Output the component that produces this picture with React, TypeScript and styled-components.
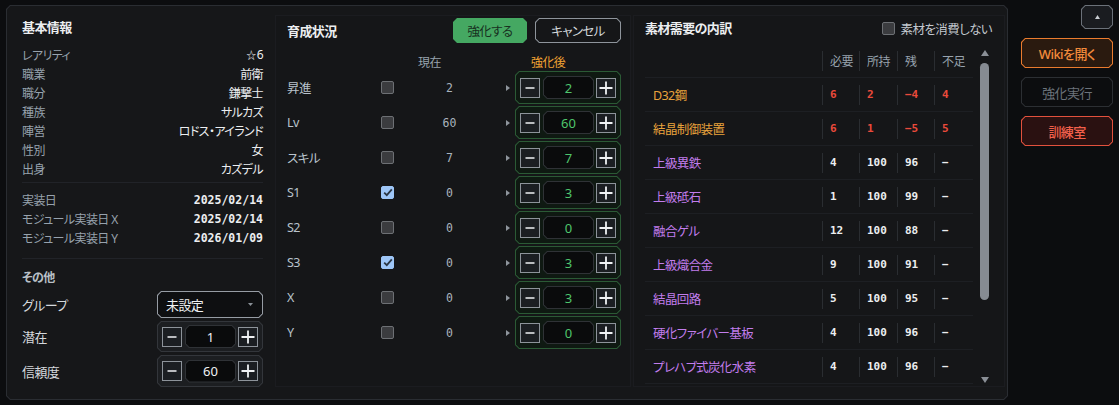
import React from "react";
import styled, { createGlobalStyle, css } from "styled-components";

const cut = (s: number) => css`
  clip-path: polygon(
    ${s}px 0,
    calc(100% - ${s}px) 0,
    100% ${s}px,
    100% calc(100% - ${s}px),
    calc(100% - ${s}px) 100%,
    ${s}px 100%,
    0 calc(100% - ${s}px),
    0 ${s}px
  );
`;

const framed = (s: number, border: string, bg: string) => css`
  position: relative;
  isolation: isolate;
  background: ${border};
  ${cut(s)}
  &::before {
    content: "";
    position: absolute;
    inset: 1px;
    background: ${bg};
    ${cut(Math.max(s - 0.6, 0))}
    z-index: -1;
  }
`;

const GlobalStyle = createGlobalStyle`
  html, body { margin: 0; padding: 0; background: #0c0d0f; }
  body {
    font-family: "Noto Sans", "Noto Sans CJK JP", sans-serif;
    font-feature-settings: "palt";
    letter-spacing: -0.6px;
    color: #e6e8ea;
    -webkit-font-smoothing: antialiased;
  }
  * { box-sizing: border-box; }
`;

const MONO = `"DejaVu Sans Mono", "Liberation Mono", monospace`;

const Page = styled.div`
  display: flex;
  align-items: flex-start;
  gap: 13px;
  padding: 5px 0 0 6px;
  width: 1119px;
  height: 405px;
`;

const MainPanel = styled.div`
  ${framed(4, "#2a2d32", "#161719")}
  width: 1002px;
  height: 395px;
  display: flex;
  align-items: stretch;
  padding: 10px 3px 13px 16px;
`;

/* ---------- left column ---------- */

const LeftColumn = styled.div`
  width: 241px;
  margin-right: 12px;
  padding-top: 3px;
  display: flex;
  flex-direction: column;
`;

const SectionTitle = styled.div`
  font-size: 13px;
  font-weight: 700;
  line-height: 18px;
  color: #eceef0;
  white-space: nowrap;
`;

const InfoList = styled.div<{ $gap: number }>`
  margin-top: ${(p) => p.$gap}px;
  display: flex;
  flex-direction: column;
`;

const InfoRow = styled.div`
  height: 19px;
  display: flex;
  align-items: center;
  justify-content: space-between;
  font-size: 12px;
  white-space: nowrap;
`;

const InfoLabel = styled.span`
  color: #97a2ad;
`;

const InfoValue = styled.span<{ $mono?: boolean }>`
  color: #eceef0;
  ${(p) =>
    p.$mono &&
    css`
      font-family: ${MONO};
      font-weight: 700;
      font-size: 11.5px;
      letter-spacing: 0;
    `}
`;

const Star = styled.span`
  font-size: 10px;
  margin-right: 1px;
`;

const Divider = styled.div<{ $top: number }>`
  height: 1px;
  background: #212328;
  margin-top: ${(p) => p.$top}px;
`;

const SubTitle = styled.div`
  margin-top: 10px;
  font-size: 12px;
  font-weight: 700;
  line-height: 18px;
  color: #b9c0c7;
`;

const FormList = styled.div`
  margin-top: 4px;
  display: flex;
  flex-direction: column;
  gap: 3px;
`;

const FormRow = styled.div`
  display: flex;
  align-items: center;
  justify-content: space-between;
`;

const FormLabel = styled.span`
  font-size: 13px;
  color: #d4d8dc;
`;

const Select = styled.div`
  ${framed(4, "#969ca4", "#0e0f11")}
  width: 106px;
  height: 27px;
  display: flex;
  align-items: center;
  justify-content: space-between;
  padding: 0 10px 0 9px;
  font-size: 13px;
  color: #f0f2f4;
`;

/* ---------- stepper ---------- */

const StepperBox = styled.div<{ $tone: "green" | "plain"; $h: number }>`
  ${(p) =>
    p.$tone === "green"
      ? framed(4, "#2b5a35", "#0f1912")
      : framed(4, "#33363b", "#1c1e21")}
  width: 106px;
  height: ${(p) => p.$h}px;
  display: flex;
  align-items: center;
  padding: 0 5px;
`;

const StepButton = styled.div`
  width: 20px;
  height: 20px;
  border: 1px solid #8d939a;
  background: #1b1e22;
  display: grid;
  place-items: center;
  flex: none;
`;

const ValueField = styled.div<{ $tone: "green" | "plain" }>`
  ${framed(4, "#2f3236", "#0a0b0c")}
  width: 51px;
  height: 23px;
  margin: 0 2px 0 3px;
  display: grid;
  place-items: center;
  font-size: 13px;
  letter-spacing: 0;
  color: ${(p) => (p.$tone === "green" ? "#4fc56c" : "#f0f2f4")};
`;

const MinusIcon = () => (
  <svg width="12" height="12" viewBox="0 0 12 12">
    <path d="M1.5 6h9" stroke="#f0f2f4" strokeWidth="1.6" />
  </svg>
);
const PlusIcon = () => (
  <svg width="14" height="14" viewBox="0 0 14 14">
    <path d="M0.5 7h13M7 0.5v13" stroke="#f0f2f4" strokeWidth="1.8" />
  </svg>
);

const Stepper: React.FC<{ value: string | number; tone: "green" | "plain"; h?: number }> = ({
  value,
  tone,
  h = 33,
}) => (
  <StepperBox $tone={tone} $h={h}>
    <StepButton>
      <MinusIcon />
    </StepButton>
    <ValueField $tone={tone}>{value}</ValueField>
    <StepButton>
      <PlusIcon />
    </StepButton>
  </StepperBox>
);

/* ---------- checkbox ---------- */

const CheckBox = styled.div<{ $checked?: boolean }>`
  width: 13px;
  height: 13px;
  border-radius: 2px;
  border: 1px solid ${(p) => (p.$checked ? "#9ec6f7" : "#6d7074")};
  background: ${(p) => (p.$checked ? "#9ec6f7" : "#3b3c3f")};
  display: grid;
  place-items: center;
  flex: none;
`;

const Check: React.FC<{ checked?: boolean }> = ({ checked }) => (
  <CheckBox $checked={checked}>
    {checked && (
      <svg width="10" height="9" viewBox="0 0 10 9">
        <path d="M1.2 4.6l2.6 2.6L8.8 1.4" stroke="#2a3644" strokeWidth="1.8" fill="none" />
      </svg>
    )}
  </CheckBox>
);

/* ---------- cards ---------- */

const Card = styled.div<{ $w: number; $ml?: number }>`
  width: ${(p) => p.$w}px;
  margin-left: ${(p) => p.$ml ?? 0}px;
  border: 1px solid #1b1c20;
  background: #151618;
  display: flex;
  flex-direction: column;
`;

const GrowthCard = styled(Card)`
  padding: 2px 9px 0 11px;
`;

const CardHeader = styled.div<{ $h: number }>`
  height: ${(p) => p.$h}px;
  display: flex;
  align-items: center;
  gap: 8px;
`;

const HeaderTitle = styled(SectionTitle)`
  flex: 1;
`;

const PrimaryButton = styled.div`
  ${framed(4, "#45a862", "#45a862")}
  width: 74px;
  height: 25px;
  display: grid;
  place-items: center;
  font-size: 12.5px;
  color: #17301f;
`;

const GhostButton = styled.div`
  ${framed(4, "#8e949b", "#151618")}
  width: 86px;
  height: 25px;
  display: grid;
  place-items: center;
  font-size: 12.5px;
  color: #d4d8dc;
`;

const growthGrid = css`
  display: grid;
  grid-template-columns: 94px 13px 111px 10px 106px;
  align-items: center;
`;

const GrowthHead = styled.div`
  ${growthGrid}
  margin-top: 10px;
  height: 18px;
  font-size: 12px;
`;

const HeadCell = styled.span<{ $col: number; $ml: number; $accent?: boolean }>`
  grid-column: ${(p) => p.$col};
  margin-left: ${(p) => p.$ml}px;
  color: ${(p) => (p.$accent ? "#f2a233" : "#97a2ad")};
  white-space: nowrap;
`;

const GrowthRows = styled.div`
  display: flex;
  flex-direction: column;
  gap: 2px;
`;

const GrowthRow = styled.div`
  ${growthGrid}
  height: 33px;
`;

const GrowthLabel = styled.span`
  font-size: 12.5px;
  color: #b9c3cc;
`;

const CurrentValue = styled.span`
  text-align: center;
  font-family: ${MONO};
  font-size: 11.5px;
  letter-spacing: 0;
  color: #a9b3bd;
`;

const ArrowCell = styled.span`
  display: flex;
  align-items: center;
  padding-left: 1px;
`;

/* ---------- material card ---------- */

const MaterialCard = styled(Card)`
  padding: 2px 0 0 11px;
`;

const ToggleLabel = styled.label`
  display: flex;
  align-items: center;
  gap: 6px;
  padding-right: 12px;
  font-size: 12.5px;
  color: #c3c9cf;
`;

const MaterialBody = styled.div`
  display: flex;
  gap: 7px;
  margin-top: 7px;
`;

const Table = styled.div`
  width: 328px;
  display: flex;
  flex-direction: column;
`;

const tableGrid = css`
  display: grid;
  grid-template-columns: 177px 37px 38px 37px 39px;
  align-items: center;
  border-bottom: 1px solid #1d1f23;
`;

const TableHead = styled.div`
  ${tableGrid}
  height: 33px;
  font-size: 12px;
  color: #97a2ad;
`;

const TableRow = styled.div`
  ${tableGrid}
  height: 34px;
`;

const NameCell = styled.span<{ $tone: "gold" | "purple" }>`
  padding-left: 8px;
  font-size: 12.5px;
  white-space: nowrap;
  color: ${(p) => (p.$tone === "gold" ? "#e9a33c" : "#c27ded")};
`;

const NumCell = styled.span<{ $warn?: boolean; $head?: boolean }>`
  height: 20px;
  display: flex;
  align-items: center;
  padding-left: 7px;
  border-left: 1px solid #2a2d31;
  white-space: nowrap;
  ${(p) =>
    p.$head
      ? css``
      : css`
          font-family: ${MONO};
          font-weight: 700;
          font-size: 11px;
          letter-spacing: 0;
          color: ${p.$warn ? "#ea4a3b" : "#eceef0"};
        `}
`;

const ScrollTrack = styled.div`
  width: 9px;
  height: 340px;
  margin-top: 1px;
  display: flex;
  flex-direction: column;
  align-items: center;
  padding: 4px 0 3px;
`;

const ScrollThumb = styled.div`
  width: 9px;
  height: 237px;
  margin-top: 7px;
  border-radius: 5px;
  background: #868b92;
`;

const ScrollDown = styled.div`
  margin-top: auto;
  display: flex;
`;

/* ---------- side ---------- */

const SideColumn = styled.div`
  width: 92px;
  display: flex;
  flex-direction: column;
  align-items: flex-end;
  gap: 9px;
`;

const MiniButton = styled.div`
  ${framed(4, "#6b7179", "#1a1c20")}
  width: 32px;
  height: 24px;
  display: grid;
  place-items: center;
`;

const SideButton = styled.div<{ $tone: "orange" | "muted" | "red" }>`
  ${(p) =>
    p.$tone === "orange"
      ? framed(4, "#ea7b2e", "#2a1a0f")
      : p.$tone === "red"
      ? framed(4, "#e2513d", "#2a1111")
      : framed(4, "#2c2f33", "#0c0d0f")}
  width: 92px;
  height: 30px;
  display: grid;
  place-items: center;
  font-size: 13px;
  font-weight: ${(p) => (p.$tone === "muted" ? 400 : 500)};
  color: ${(p) =>
    p.$tone === "orange" ? "#f28a3b" : p.$tone === "red" ? "#f2604b" : "#6b737b"};
`;

/* ---------- data ---------- */

const basics: [string, React.ReactNode][] = [
  [
    "レアリティ",
    <>
      <Star>☆</Star>6
    </>,
  ],
  ["職業", "前衛"],
  ["職分", "鎌撃士"],
  ["種族", "サルカズ"],
  ["陣営", "ロドス・アイランド"],
  ["性別", "女"],
  ["出身", "カズデル"],
];

const dates: [string, string][] = [
  ["実装日", "2025/02/14"],
  ["モジュール実装日 X", "2025/02/14"],
  ["モジュール実装日 Y", "2026/01/09"],
];

const growth = [
  { label: "昇進", checked: false, cur: "2", next: "2" },
  { label: "Lv", checked: false, cur: "60", next: "60" },
  { label: "スキル", checked: false, cur: "7", next: "7" },
  { label: "S1", checked: true, cur: "0", next: "3" },
  { label: "S2", checked: false, cur: "0", next: "0" },
  { label: "S3", checked: true, cur: "0", next: "3" },
  { label: "X", checked: false, cur: "0", next: "3" },
  { label: "Y", checked: false, cur: "0", next: "0" },
];

type Mat = {
  name: string;
  tone: "gold" | "purple";
  need: string;
  have: string;
  left: string;
  lack: string;
  warn?: boolean;
};

const materials: Mat[] = [
  { name: "D32鋼", tone: "gold", need: "6", have: "2", left: "−4", lack: "4", warn: true },
  { name: "結晶制御装置", tone: "gold", need: "6", have: "1", left: "−5", lack: "5", warn: true },
  { name: "上級異鉄", tone: "purple", need: "4", have: "100", left: "96", lack: "−" },
  { name: "上級砥石", tone: "purple", need: "1", have: "100", left: "99", lack: "−" },
  { name: "融合ゲル", tone: "purple", need: "12", have: "100", left: "88", lack: "−" },
  { name: "上級熾合金", tone: "purple", need: "9", have: "100", left: "91", lack: "−" },
  { name: "結晶回路", tone: "purple", need: "5", have: "100", left: "95", lack: "−" },
  { name: "硬化ファイバー基板", tone: "purple", need: "4", have: "100", left: "96", lack: "−" },
  { name: "プレハブ式炭化水素", tone: "purple", need: "4", have: "100", left: "96", lack: "−" },
];

const SmallTri: React.FC<{ dir: "up" | "down" | "right"; w: number; h: number; color: string }> = ({
  dir,
  w,
  h,
  color,
}) => {
  const d =
    dir === "up"
      ? `M0 ${h} L${w / 2} 0 L${w} ${h} Z`
      : dir === "down"
      ? `M0 0 L${w} 0 L${w / 2} ${h} Z`
      : `M0 0 L${w} ${h / 2} L0 ${h} Z`;
  return (
    <svg width={w} height={h} viewBox={`0 0 ${w} ${h}`}>
      <path d={d} fill={color} />
    </svg>
  );
};

export default function App() {
  return (
    <>
      <GlobalStyle />
      <Page>
        <MainPanel>
          <LeftColumn>
            <SectionTitle>基本情報</SectionTitle>
            <InfoList $gap={9}>
              {basics.map(([k, v]) => (
                <InfoRow key={k}>
                  <InfoLabel>{k}</InfoLabel>
                  <InfoValue>{v}</InfoValue>
                </InfoRow>
              ))}
            </InfoList>
            <Divider $top={4} />
            <InfoList $gap={7}>
              {dates.map(([k, v]) => (
                <InfoRow key={k}>
                  <InfoLabel>{k}</InfoLabel>
                  <InfoValue $mono>{v}</InfoValue>
                </InfoRow>
              ))}
            </InfoList>
            <Divider $top={11} />
            <SubTitle>その他</SubTitle>
            <FormList>
              <FormRow>
                <FormLabel>グループ</FormLabel>
                <Select>
                  <span>未設定</span>
                  <SmallTri dir="down" w={5} h={3} color="#8a9098" />
                </Select>
              </FormRow>
              <FormRow>
                <FormLabel>潜在</FormLabel>
                <Stepper tone="plain" value="1" h={31} />
              </FormRow>
              <FormRow>
                <FormLabel>信頼度</FormLabel>
                <Stepper tone="plain" value="60" h={32} />
              </FormRow>
            </FormList>
          </LeftColumn>

          <GrowthCard $w={356}>
            <CardHeader $h={25}>
              <HeaderTitle>育成状況</HeaderTitle>
              <PrimaryButton>強化する</PrimaryButton>
              <GhostButton>キャンセル</GhostButton>
            </CardHeader>
            <GrowthHead>
              <HeadCell $col={3} $ml={24}>
                現在
              </HeadCell>
              <HeadCell $col={5} $ml={16} $accent>
                強化後
              </HeadCell>
            </GrowthHead>
            <GrowthRows>
              {growth.map((g) => (
                <GrowthRow key={g.label}>
                  <GrowthLabel>{g.label}</GrowthLabel>
                  <Check checked={g.checked} />
                  <CurrentValue>{g.cur}</CurrentValue>
                  <ArrowCell>
                    <SmallTri dir="right" w={4} h={6} color="#8e959c" />
                  </ArrowCell>
                  <Stepper tone="green" value={g.next} />
                </GrowthRow>
              ))}
            </GrowthRows>
          </GrowthCard>

          <MaterialCard $w={372} $ml={2}>
            <CardHeader $h={20}>
              <HeaderTitle>素材需要の内訳</HeaderTitle>
              <ToggleLabel>
                <Check />
                素材を消費しない
              </ToggleLabel>
            </CardHeader>
            <MaterialBody>
              <Table>
                <TableHead>
                  <span />
                  <NumCell $head>必要</NumCell>
                  <NumCell $head>所持</NumCell>
                  <NumCell $head>残</NumCell>
                  <NumCell $head>不足</NumCell>
                </TableHead>
                {materials.map((m) => (
                  <TableRow key={m.name}>
                    <NameCell $tone={m.tone}>{m.name}</NameCell>
                    <NumCell $warn={m.warn}>{m.need}</NumCell>
                    <NumCell $warn={m.warn}>{m.have}</NumCell>
                    <NumCell $warn={m.warn}>{m.left}</NumCell>
                    <NumCell $warn={m.warn}>{m.lack}</NumCell>
                  </TableRow>
                ))}
              </Table>
              <ScrollTrack>
                <SmallTri dir="up" w={8} h={6} color="#8a8f96" />
                <ScrollThumb />
                <ScrollDown>
                  <SmallTri dir="down" w={8} h={6} color="#8a8f96" />
                </ScrollDown>
              </ScrollTrack>
            </MaterialBody>
          </MaterialCard>
        </MainPanel>

        <SideColumn>
          <MiniButton>
            <SmallTri dir="up" w={5} h={4} color="#c9cdd2" />
          </MiniButton>
          <SideButton $tone="orange">Wikiを開く</SideButton>
          <SideButton $tone="muted">強化実行</SideButton>
          <SideButton $tone="red">訓練室</SideButton>
        </SideColumn>
      </Page>
    </>
  );
}
